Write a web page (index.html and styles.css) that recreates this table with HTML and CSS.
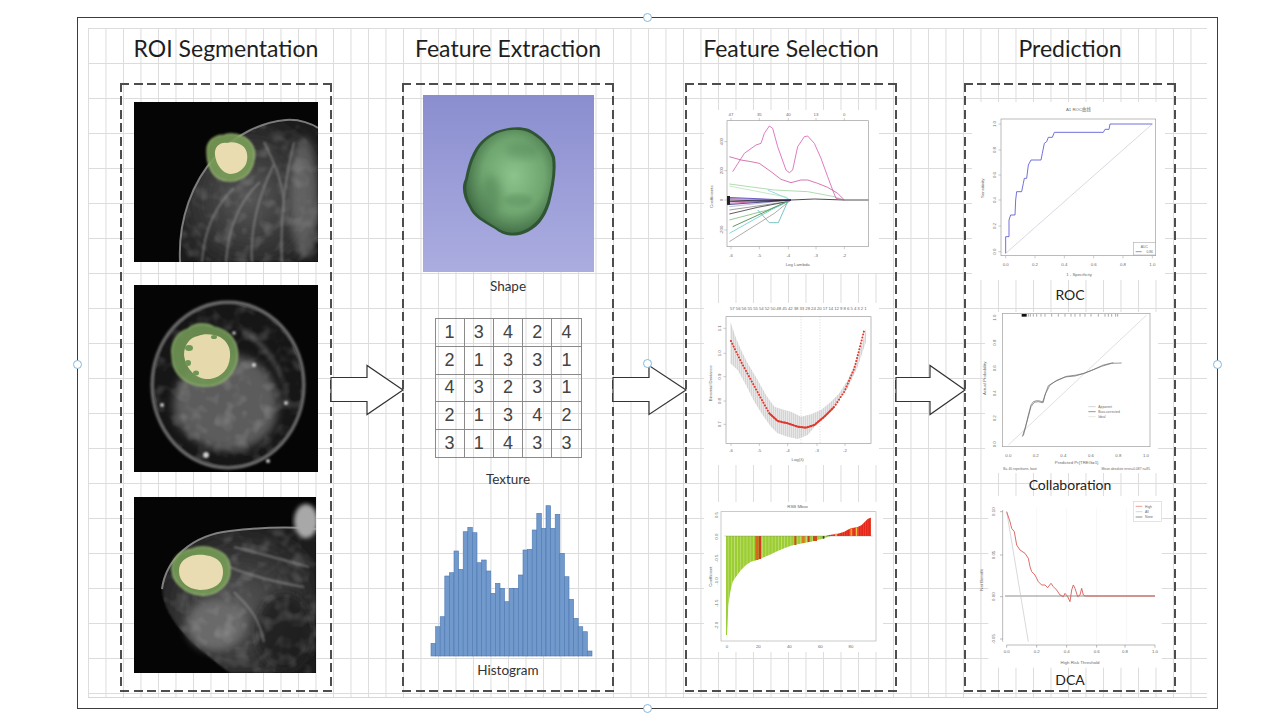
FILE: index.html
```html
<!DOCTYPE html>
<html lang="en">
<head>
<meta charset="utf-8">
<title>Radiomics workflow</title>
<link rel="stylesheet" href="styles.css">
</head>
<body>
<svg class="defs" aria-hidden="true">
  <defs>
    <radialGradient id="tissue" cx="50%" cy="55%" r="60%">
      <stop offset="0" stop-color="#575757"/>
      <stop offset=".55" stop-color="#383838"/>
      <stop offset="1" stop-color="#1e1e1e"/>
    </radialGradient>
    <linearGradient id="shapebg" x1="0" y1="0" x2="0" y2="1">
      <stop offset="0" stop-color="#8a8ecf"/>
      <stop offset="1" stop-color="#abade0"/>
    </linearGradient>
    <radialGradient id="blobg" cx="55%" cy="45%" r="60%">
      <stop offset="0" stop-color="#8cc28b"/>
      <stop offset=".6" stop-color="#6fa56f"/>
      <stop offset="1" stop-color="#3b6640"/>
    </radialGradient>
    <filter id="noise" x="0" y="0" width="100%" height="100%">
      <feTurbulence type="fractalNoise" baseFrequency="0.07" numOctaves="2" seed="11"/>
      <feColorMatrix values="0 0 0 0 1  0 0 0 0 1  0 0 0 0 1  2.6 0 0 0 -1.2"/>
      <feComposite in2="SourceGraphic" operator="in"/>
    </filter>
    <filter id="b1"><feGaussianBlur stdDeviation="0.8"/></filter>
    <filter id="b2"><feGaussianBlur stdDeviation="2"/></filter>
    <filter id="b4" x="-30%" y="-30%" width="160%" height="160%"><feGaussianBlur stdDeviation="4"/></filter>
    <pattern id="vl" width="6" height="10" patternUnits="userSpaceOnUse">
      <rect width="1.4" height="10" fill="#bdbdbd"/>
    </pattern>
    <pattern id="gbars" width="9.4" height="10" patternUnits="userSpaceOnUse">
      <rect width="9.4" height="10" fill="#d6ee9c"/>
      <rect width="8" height="10" fill="#9ccd34"/>
    </pattern>
    <pattern id="rbars" width="7" height="10" patternUnits="userSpaceOnUse">
      <rect width="7" height="10" fill="#f07a5a"/>
      <rect width="6" height="10" fill="#e5261b"/>
    </pattern>
  </defs>
</svg>

<div class="frame">
  <div class="grid">

    <!-- Column 1 -->
    <section class="col">
      <h2 class="title">ROI Segmentation</h2>
      <div class="box">
        <svg class="mri mri1" viewBox="0 0 184 160">
          <rect width="184" height="160" fill="#050505"/>
          <path d="M46 160 C44 118 58 80 82 54 C102 32 128 20 152 18 C166 17 178 22 184 26 L184 160 Z" fill="url(#tissue)" filter="url(#b1)"/>
          <path d="M46 160 C44 118 58 80 82 54 C102 32 128 20 152 18 C166 17 178 22 184 26 L184 160 Z" fill="#fff" filter="url(#noise)" opacity=".16"/>
          <ellipse cx="170" cy="95" rx="14" ry="60" fill="#9a9a9a" opacity=".45" filter="url(#b4)"/>
          <g stroke="#9a9a9a" stroke-width="2.2" fill="none" opacity=".5" filter="url(#b1)">
            <path d="M68 160 C70 130 80 105 100 86"/>
            <path d="M92 160 C94 130 104 100 126 80"/>
            <path d="M118 160 C116 130 124 95 140 62"/>
            <path d="M148 160 C146 120 150 80 160 40"/>
            <path d="M130 40 C140 60 150 80 150 110"/>
          </g>
          <path d="M46 160 C44 118 58 80 82 54 C102 32 128 20 152 18 C166 17 178 22 184 26" fill="none" stroke="#8d8d8d" stroke-width="2" opacity=".85"/>
          <path d="M73 50 C72 40 80 33 90 33 C96 31 104 32 110 35 C118 40 122 48 120 58 C119 66 114 74 106 77 C100 80 92 80 86 77 C78 74 73 63 73 50 Z" fill="#7a9f58" opacity=".9" stroke="#a9c77f" stroke-width="1.2" filter="url(#b1)"/>
          <path d="M81 53 C80 45 86 40 93 41 C98 39 106 41 110 45 C114 50 114 57 112 62 C109 68 103 72 96 72 C88 71 82 62 81 53 Z" fill="#e9dcb1"/>
        </svg>
        <svg class="mri mri2" viewBox="0 0 184 187">
          <rect width="184" height="187" fill="#050505"/>
          <ellipse cx="94" cy="100" rx="76" ry="83" fill="#161616" stroke="#6e6e6e" stroke-width="3" filter="url(#b1)"/>
          <path d="M40 112 C45 82 80 62 110 72 C140 82 150 112 140 140 C128 165 95 170 70 160 C50 150 36 136 40 112 Z" fill="#5c5c5c" filter="url(#b4)"/>
          <path d="M100 40 C130 50 150 80 155 120 C150 90 130 60 100 40 Z" fill="#4a4a4a" filter="url(#b2)"/>
          <ellipse cx="94" cy="100" rx="74" ry="81" fill="#fff" filter="url(#noise)" opacity=".16"/>
          <g fill="#cfcfcf" filter="url(#b1)">
            <circle cx="72" cy="170" r="3"/><circle cx="120" cy="80" r="2.2"/><circle cx="152" cy="118" r="2"/>
            <circle cx="28" cy="120" r="2"/><circle cx="134" cy="176" r="2"/><circle cx="100" cy="48" r="1.8"/>
          </g>
          <path d="M38 70 C36 58 44 46 54 44 C60 38 72 37 80 42 C92 44 101 52 103 64 C106 78 98 92 86 98 C76 103 62 102 52 96 C42 90 38 80 38 70 Z" fill="#6f9655" opacity=".9" stroke="#9fc27a" stroke-width="1.2" filter="url(#b1)"/>
          <path d="M50 70 C50 60 56 52 64 51 C70 48 80 49 86 52 C93 56 97 63 96 72 C95 84 88 92 76 94 C64 95 52 86 50 70 Z" fill="#e6d9ac"/>
          <g fill="#6f9655"><ellipse cx="55" cy="63" rx="4" ry="3"/><ellipse cx="54" cy="78" rx="3" ry="3"/><ellipse cx="62" cy="88" rx="3" ry="2.5"/><ellipse cx="80" cy="52" rx="3" ry="2"/></g>
        </svg>
        <svg class="mri mri3" viewBox="0 0 182 176">
          <rect width="182" height="176" fill="#050505"/>
          <path d="M28 92 C32 62 58 38 96 34 C130 30 160 30 182 32 L182 176 L96 176 C62 150 30 125 28 92 Z" fill="url(#tissue)" filter="url(#b1)"/>
          <ellipse cx="82" cy="128" rx="30" ry="26" fill="#6a6a6a" filter="url(#b4)"/>
          <ellipse cx="150" cy="135" rx="28" ry="38" fill="#1f1f1f" opacity=".8" filter="url(#b4)"/>
          <path d="M28 92 C32 62 58 38 96 34 C130 30 160 30 182 32 L182 176 L96 176 C62 150 30 125 28 92 Z" fill="#fff" filter="url(#noise)" opacity=".16"/>
          <g stroke="#a0a0a0" stroke-width="2.2" fill="none" opacity=".5" filter="url(#b1)">
            <path d="M100 50 C120 55 140 60 175 70"/>
            <path d="M95 70 C120 80 140 85 170 90"/>
            <path d="M100 95 C115 110 125 120 130 145"/>
          </g>
          <path d="M28 92 C32 62 58 38 96 34 C130 30 160 30 182 32" fill="none" stroke="#808080" stroke-width="2"/>
          <ellipse cx="172" cy="24" rx="12" ry="17" fill="#a8a8a8" filter="url(#b2)"/>
          <path d="M38 74 C37 62 46 53 58 52 C64 49 74 49 80 52 C90 55 96 62 96 72 C97 84 88 95 74 98 C58 100 40 90 38 74 Z" fill="#759c57" opacity=".9" stroke="#a3c47c" stroke-width="1.2" filter="url(#b1)"/>
          <path d="M45 74 C45 65 52 59 62 58 C70 57 80 59 85 64 C90 69 90 78 87 84 C83 90 75 93 66 93 C54 92 45 85 45 74 Z" fill="#eadcb2"/>
        </svg>
      </div>
    </section>

    <div class="gap gap1">
      <svg class="arrow" width="70" height="50" viewBox="0 0 70 50"><path d="M-1 12.5 H35 V0.5 L71 25 L35 49.5 V36.5 H-1 Z"/></svg>
    </div>

    <!-- Column 2 -->
    <section class="col">
      <h2 class="title">Feature Extraction</h2>
      <div class="box">
        <svg class="shape" viewBox="0 0 171 177">
          <rect width="171" height="177" fill="url(#shapebg)"/>
          <path d="M77 35 C86 32 97 31 106 34 C118 40 128 50 132 62 C134 76 131 92 127 108 C122 124 114 134 100 139 C90 142 80 141 72 134 C60 127 50 122 46 112 C40 102 38 92 42 84 C44 74 46 66 50 58 C56 46 66 38 77 35 Z" fill="#2f5533"/>
          <path d="M78 37 C87 34 97 34 105 37 C116 42 126 52 129 63 C131 77 128 92 124 107 C119 122 112 131 99 136 C90 139 81 138 73 132 C62 125 52 120 48 110 C43 101 42 92 45 84 C47 74 49 66 53 59 C58 48 68 40 78 37 Z" fill="url(#blobg)"/>
          <ellipse cx="68" cy="100" rx="10" ry="20" fill="#4a7c50" opacity=".45" filter="url(#b4)"/>
          <ellipse cx="100" cy="55" rx="18" ry="8" fill="#4f8455" opacity=".4" filter="url(#b4)"/>
          <ellipse cx="95" cy="105" rx="14" ry="6" fill="#4f8455" opacity=".35" filter="url(#b2)"/>
        </svg>
        <div class="label l-shape">Shape</div>
        <div class="texture">
          <span>1</span><span>3</span><span>4</span><span>2</span><span>4</span>
          <span>2</span><span>1</span><span>3</span><span>3</span><span>1</span>
          <span>4</span><span>3</span><span>2</span><span>3</span><span>1</span>
          <span>2</span><span>1</span><span>3</span><span>4</span><span>2</span>
          <span>3</span><span>1</span><span>4</span><span>3</span><span>3</span>
        </div>
        <div class="label l-texture">Texture</div>
        <svg class="hist" viewBox="0 0 180 160">
          <g fill="#7199cc" stroke="#4c79b2" stroke-width=".6">
            <rect x="13" y="143.3" width="4.6" height="12.7"/>
            <rect x="17.6" y="126.7" width="4.6" height="29.3"/>
            <rect x="22.2" y="116.7" width="4.6" height="39.3"/>
            <rect x="26.8" y="76" width="4.6" height="80"/>
            <rect x="31.4" y="72.7" width="4.6" height="83.3"/>
            <rect x="36" y="51" width="4.6" height="105"/>
            <rect x="40.6" y="69.3" width="4.6" height="86.7"/>
            <rect x="45.2" y="31.7" width="4.6" height="124.3"/>
            <rect x="49.8" y="27.3" width="4.6" height="128.7"/>
            <rect x="54.4" y="32.7" width="4.6" height="123.3"/>
            <rect x="59" y="62.7" width="4.6" height="93.3"/>
            <rect x="63.6" y="60" width="4.6" height="96"/>
            <rect x="68.2" y="71" width="4.6" height="85"/>
            <rect x="72.8" y="93.3" width="4.6" height="62.7"/>
            <rect x="77.4" y="83.3" width="4.6" height="72.7"/>
            <rect x="82" y="88.3" width="4.6" height="67.7"/>
            <rect x="86.6" y="101.7" width="4.6" height="54.3"/>
            <rect x="91.2" y="88.3" width="4.6" height="67.7"/>
            <rect x="95.8" y="88.3" width="4.6" height="67.7"/>
            <rect x="100.4" y="75" width="4.6" height="81"/>
            <rect x="105" y="50" width="4.6" height="106"/>
            <rect x="109.6" y="49.3" width="4.6" height="106.7"/>
            <rect x="114.2" y="30" width="4.6" height="126"/>
            <rect x="118.8" y="13.3" width="4.6" height="142.7"/>
            <rect x="123.4" y="28.3" width="4.6" height="127.7"/>
            <rect x="128" y="5.7" width="4.6" height="150.3"/>
            <rect x="132.6" y="28.3" width="4.6" height="127.7"/>
            <rect x="137.2" y="14.3" width="4.6" height="141.7"/>
            <rect x="141.8" y="53.3" width="4.6" height="102.7"/>
            <rect x="146.4" y="76.7" width="4.6" height="79.3"/>
            <rect x="151" y="99.3" width="4.6" height="56.7"/>
            <rect x="155.6" y="118.3" width="4.6" height="37.7"/>
            <rect x="160.2" y="126.7" width="4.6" height="29.3"/>
            <rect x="164.8" y="131.7" width="4.6" height="24.3"/>
            <rect x="169.4" y="151" width="4.6" height="5"/>
          </g>
        </svg>
        <div class="label l-hist">Histogram</div>
      </div>
    </section>

    <div class="gap gap2">
      <svg class="arrow" width="71" height="50" viewBox="0 0 71 50"><path d="M-1 12.5 H35 V0.5 L72 25 L35 49.5 V36.5 H-1 Z"/></svg>
    </div>

    <!-- Column 3 -->
    <section class="col">
      <h2 class="title">Feature Selection</h2>
      <div class="box">
        <svg class="sel sel1" viewBox="0 0 600 570">
          <rect x="39" y="30" width="525" height="489" fill="#fff"/>
          <g class="ax" text-anchor="middle">
            <text x="120" y="48">47</text><text x="205" y="48">35</text><text x="292" y="48">40</text><text x="375" y="48">13</text><text x="460" y="48">0</text>
            <text x="120" y="470">-6</text><text x="205" y="470">-5</text><text x="292" y="470">-4</text><text x="375" y="470">-3</text><text x="460" y="470">-2</text>
            <text x="320" y="498">Log Lambda</text>
            <text transform="translate(96 125) rotate(-90)">400</text>
            <text transform="translate(96 212) rotate(-90)">200</text>
            <text transform="translate(96 300) rotate(-90)">0</text>
            <text transform="translate(96 390) rotate(-90)">-200</text>
            <text transform="translate(66 290) rotate(-90)">Coefficients</text>
          </g>
          <rect x="108" y="62" width="424" height="378" fill="none" stroke="#9a9a9a" stroke-width="2"/>
          <g stroke="#9a9a9a" stroke-width="1.5">
            <path d="M120 440v8M205 440v8M292 440v8M375 440v8M460 440v8M120 62v-8M205 62v-8M292 62v-8M375 62v-8M460 62v-8M108 125h-8M108 212h-8M108 300h-8M108 390h-8"/>
          </g>
          <g fill="none" stroke-width="2.4" stroke-linejoin="round">
            <polyline stroke="#9bd39b" points="115,252 250,270 350,275 430,290 460,300"/>
            <polyline stroke="#b9e2b9" points="115,258 290,292"/>
            <polyline stroke="#7fd0d8" points="230,270 300,300"/>
            <polyline stroke="#aab0d0" points="115,320 300,300"/>
            <polyline stroke="#888" points="115,330 290,305"/>
            <polyline stroke="#333" points="115,342 200,322 290,305"/>
            <polyline stroke="#77bb77" points="115,360 230,330 300,300"/>
            <polyline stroke="#3a7a3a" points="125,380 300,300"/>
            <polyline stroke="#66cccc" points="115,400 240,330 290,305"/>
            <polyline stroke="#55b5b5" points="200,330 235,368 262,368 290,305"/>
            <polyline stroke="#999" points="115,425 250,340 300,300"/>
            <polyline stroke="#3c3cc8" points="108,292 240,298 300,300"/>
            <polyline stroke="#7b3fa0" points="108,296 300,300"/>
            <polyline stroke="#1a1a80" points="108,305 300,300"/>
            <polyline stroke="#cc44aa" points="108,310 240,303 300,300"/>
            <polyline stroke="#2a2a70" points="108,314 300,300"/>
            <polyline stroke="#222" points="108,300 230,303 300,300 370,297 460,300 532,300"/>
            <polyline stroke="#d65bb0" points="125,215 160,160 195,135 210,130 220,100 235,78 245,85 260,140 285,210 295,218 305,210 320,140 340,110 350,108 370,130 390,175 410,230 425,270 435,295 460,300"/>
            <polyline stroke="#c9579c" points="115,170 150,180 180,185 205,190 240,215 270,238 300,248 330,240 350,240 380,250 410,262 440,280 460,300"/>
          </g>
          <rect x="108" y="288" width="9" height="26" fill="#222"/>
        </svg>

        <svg class="sel sel2" viewBox="0 0 600 600">
          <rect x="39" y="24" width="525" height="486" fill="#fff"/>
          <g class="ax" text-anchor="middle">
            <text x="322" y="46" textLength="410">57 56 56 55 55 54 52 50 48 45 42 38 33 28 24 20 17 14 12 9 8 6 5 4 3 2 1</text>
            <text x="120" y="472">-6</text><text x="205" y="472">-5</text><text x="290" y="472">-4</text><text x="378" y="472">-3</text><text x="462" y="472">-2</text>
            <text x="320" y="498">Log(λ)</text>
            <text transform="translate(90 100) rotate(-90)">1.1</text>
            <text transform="translate(90 175) rotate(-90)">1.0</text>
            <text transform="translate(90 245) rotate(-90)">0.9</text>
            <text transform="translate(90 318) rotate(-90)">0.8</text>
            <text transform="translate(90 388) rotate(-90)">0.7</text>
            <text transform="translate(62 265) rotate(-90)">Binomial Deviance</text>
          </g>
          <rect x="105" y="65" width="435" height="380" fill="none" stroke="#9a9a9a" stroke-width="2"/>
          <g stroke="#9a9a9a" stroke-width="1.5">
            <path d="M120 445v8M205 445v8M290 445v8M378 445v8M462 445v8M105 100h-8M105 175h-8M105 245h-8M105 318h-8M105 388h-8"/>
          </g>
          <polygon fill="#e6e6e6" points="118,80 135,130 150,165 170,205 200,255 225,300 250,335 280,345 300,350 330,365 360,358 390,345 420,320 445,295 470,255 495,200 520,125 525,100 525,140 500,215 470,280 440,320 410,352 380,385 350,420 320,432 290,425 260,415 240,395 215,360 190,320 165,270 140,225 118,205"/>
          <polygon fill="url(#vl)" points="118,80 135,130 150,165 170,205 200,255 225,300 250,335 280,345 300,350 330,365 360,358 390,345 420,320 445,295 470,255 495,200 520,125 525,100 525,140 500,215 470,280 440,320 410,352 380,385 350,420 320,432 290,425 260,415 240,395 215,360 190,320 165,270 140,225 118,205"/>
          <g stroke="#b0b0b0" stroke-width="1.5" stroke-dasharray="3 5">
            <path d="M330 65V445M387 65V445"/>
          </g>
          <polyline fill="none" stroke="#e0382c" stroke-width="6" stroke-linecap="round" stroke-dasharray="0.1 9" points="120,138 150,200 180,255 210,310 235,355 260,378 290,385 320,395 345,398 370,390 400,365 430,335 460,290 490,220 520,105"/>
          <polyline fill="none" stroke="#e0382c" stroke-width="6" stroke-linecap="round" stroke-dasharray="0.1 4" points="235,355 260,378 290,385 320,395 345,398 370,390 400,365 430,335"/>
        </svg>

        <svg class="sel sel3" viewBox="0 0 600 480">
          <rect x="39" y="21" width="537" height="450" fill="#fff"/>
          <g class="ax" text-anchor="middle">
            <text x="320" y="40">RSB Mbox</text>
            <text x="108" y="458">0</text><text x="202" y="458">20</text><text x="295" y="458">40</text><text x="388" y="458">60</text><text x="480" y="458">80</text>
            <text transform="translate(80 60) rotate(-90)">0.5</text>
            <text transform="translate(80 125) rotate(-90)">0.0</text>
            <text transform="translate(80 190) rotate(-90)">-0.5</text>
            <text transform="translate(80 258) rotate(-90)">-1.0</text>
            <text transform="translate(80 325) rotate(-90)">-1.5</text>
            <text transform="translate(80 392) rotate(-90)">-2.0</text>
            <text transform="translate(62 245) rotate(-90)">Coefficient</text>
          </g>
          <rect x="90" y="50" width="465" height="388" fill="none" stroke="#b0b0b0" stroke-width="2"/>
          <polygon fill="url(#gbars)" points="105,123 420,123 410,126 400,130 380,135 360,140 340,144 320,148 300,152 280,160 260,168 240,178 215,188 200,195 180,200 165,210 150,225 135,245 125,260 118,290 112,330 110,380 108,420 105,420"/>
          <g>
            <rect x="193" y="123" width="9" height="72" fill="#d9661f"/>
            <rect x="203" y="123" width="7" height="69" fill="#cf3b1c"/>
            <rect x="310" y="123" width="6" height="27" fill="#d84a1c"/>
            <rect x="333" y="123" width="8" height="21" fill="#e07b20"/>
            <rect x="350" y="123" width="6" height="18" fill="#cf3b1c"/>
            <rect x="366" y="123" width="12" height="15" fill="#d2491c"/>
            <rect x="395" y="123" width="5" height="8" fill="#3a3a3a"/>
          </g>
          <polygon fill="url(#rbars)" points="405,123 412,121 420,119 440,116 460,110 470,104 480,100 500,96 512,90 520,82 530,72 538,68 540,68 540,123"/>
          <rect x="432" y="116" width="6" height="7" fill="#e8b040"/>
          <rect x="478" y="100" width="6" height="23" fill="#f0a030"/>
          <rect x="494" y="97" width="5" height="26" fill="#f0c040"/>
          <line x1="100" y1="123" x2="545" y2="123" stroke="#777" stroke-width="1"/>
        </svg>
      </div>
    </section>

    <div class="gap gap3">
      <svg class="arrow" width="67" height="50" viewBox="0 0 67 50"><path d="M-1 12.5 H33 V0.5 L68 25 L33 49.5 V36.5 H-1 Z"/></svg>
    </div>

    <!-- Column 4 -->
    <section class="col">
      <h2 class="title">Prediction</h2>
      <div class="box">
        <svg class="pred roc" viewBox="0 0 630 546">
          <rect x="21" y="6" width="579" height="534" fill="#fff"/>
          <g class="ax" text-anchor="middle">
            <text class="cjk" x="340" y="34">A1 ROC曲线</text>
            <text x="122" y="497">0.0</text><text x="210" y="497">0.2</text><text x="298" y="497">0.4</text><text x="386" y="497">0.6</text><text x="474" y="497">0.8</text><text x="562" y="497">1.0</text>
            <text x="342" y="528">1 - Specificity</text>
            <text transform="translate(92 72) rotate(-90)">1.0</text>
            <text transform="translate(92 150) rotate(-90)">0.8</text>
            <text transform="translate(92 225) rotate(-90)">0.6</text>
            <text transform="translate(92 300) rotate(-90)">0.4</text>
            <text transform="translate(92 378) rotate(-90)">0.2</text>
            <text transform="translate(92 455) rotate(-90)">0.0</text>
            <text transform="translate(56 265) rotate(-90)">Sensitivity</text>
          </g>
          <rect x="108" y="57" width="464" height="410" fill="none" stroke="#9a9a9a" stroke-width="2"/>
          <g stroke="#9a9a9a" stroke-width="1.5">
            <path d="M122 467v8M210 467v8M298 467v8M386 467v8M474 467v8M562 467v8M108 72h-8M108 150h-8M108 225h-8M108 300h-8M108 378h-8M108 455h-8"/>
          </g>
          <line x1="122" y1="460" x2="562" y2="72" stroke="#b8b8c8" stroke-width="1.6"/>
          <polyline fill="none" stroke="#5b5bd6" stroke-width="2.6" points="122,460 122,410 132,410 132,360 137,345 150,345 152,300 155,275 170,275 175,250 178,235 185,235 190,195 198,180 228,180 232,160 238,130 245,125 250,112 262,112 268,97 415,97 420,88 432,88 435,72 562,72"/>
          <rect x="505" y="428" width="67" height="37" fill="#fff" stroke="#9a9a9a" stroke-width="1.5"/>
          <g class="ax tiny" text-anchor="middle"><text x="538" y="443">AUC</text><text x="554" y="459">0.86</text></g>
          <line x1="512" y1="455" x2="530" y2="455" stroke="#5b5bd6" stroke-width="2"/>
        </svg>
        <div class="plabel pl-roc">ROC</div>

        <svg class="pred cal" viewBox="0 9 630 498">
          <rect x="60" y="21" width="519" height="483" fill="#fff"/>
          <g class="ax" text-anchor="middle">
            <text x="130" y="455">0.0</text><text x="212" y="455">0.2</text><text x="295" y="455">0.4</text><text x="378" y="455">0.6</text><text x="460" y="455">0.8</text><text x="543" y="455">1.0</text>
            <text x="335" y="478">Predicted Pr{TREG=1}</text>
            <text transform="translate(92 38) rotate(-90)">1.0</text>
            <text transform="translate(92 113) rotate(-90)">0.8</text>
            <text transform="translate(92 190) rotate(-90)">0.6</text>
            <text transform="translate(92 265) rotate(-90)">0.4</text>
            <text transform="translate(92 340) rotate(-90)">0.2</text>
            <text transform="translate(92 418) rotate(-90)">0.0</text>
            <text transform="translate(64 220) rotate(-90)">Actual Probability</text>
          </g>
          <g class="ax tiny">
            <text x="115" y="495">B= 40 repetitions, boot</text>
            <text x="555" y="495" text-anchor="end">Mean absolute error=0.087 n=85</text>
          </g>
          <rect x="112" y="25" width="443" height="400" fill="none" stroke="#9a9a9a" stroke-width="2"/>
          <rect x="170" y="27" width="15" height="8" fill="#111"/>
          <path stroke="#555" stroke-width="1.5" d="M190 27v8M196 27v8M205 27v8M215 27v8M228 27v8M240 27v8M260 27v8M280 27v8M300 27v8M318 27v8M330 27v8M345 27v8M360 27v8M378 27v8M400 27v8M420 27v8M430 27v8M440 27v8M452 27v8M458 27v8"/>
          <line x1="130" y1="420" x2="545" y2="30" stroke="#cfcfcf" stroke-width="2"/>
          <polyline fill="none" stroke="#8a8a8a" stroke-width="2.6" points="175,392 182,365 190,330 198,300 205,290 215,287 225,288 235,292 240,270 250,242 270,230 300,216 330,213 355,206 380,196 410,184 440,175 470,174"/>
          <polyline fill="none" stroke="#666" stroke-width="2" points="172,395 180,370 190,335 198,305 208,292 220,290 232,293 242,265 255,240 275,226 305,214 335,210 360,204 385,194 415,180 445,173"/>
          <path stroke="#aaa" stroke-width="1.5" d="M370 305h22"/>
          <path stroke="#666" stroke-width="2" d="M370 320h22"/>
          <path stroke="#cfcfcf" stroke-width="1.5" d="M370 335h22"/>
          <g class="ax tiny"><text x="400" y="309">Apparent</text><text x="400" y="324">Bias-corrected</text><text x="400" y="339">Ideal</text></g>
        </svg>
        <div class="plabel pl-cal">Collaboration</div>

        <svg class="pred dca" viewBox="0 3 630 522">
          <rect x="70" y="3" width="520" height="515" fill="#fff"/>
          <path stroke="#eeeeee" stroke-width="1.5" d="M215 40V445M305 40V445M395 40V445M485 40V445"/>
          <g class="ax" text-anchor="middle">
            <text x="125" y="473">0.0</text><text x="215" y="473">0.2</text><text x="305" y="473">0.4</text><text x="395" y="473">0.6</text><text x="480" y="473">0.8</text><text x="570" y="473">1.0</text>
            <text x="345" y="507">High Risk Threshold</text>
            <text transform="translate(90 50) rotate(-90)">0.10</text>
            <text transform="translate(90 180) rotate(-90)">0.05</text>
            <text transform="translate(90 305) rotate(-90)">0.00</text>
            <text transform="translate(90 432) rotate(-90)">-0.05</text>
            <text transform="translate(54 255) rotate(-90)">Net Benefit</text>
          </g>
          <path stroke="#777" stroke-width="1.5" fill="none" d="M113 45V440M105 50h8M105 180h8M105 305h8M105 432h8M125 450H570M125 450v8M215 450v8M305 450v8M395 450v8M480 450v8M570 450v8"/>
          <line x1="120" y1="303" x2="570" y2="303" stroke="#555" stroke-width="2"/>
          <line x1="125" y1="50" x2="190" y2="440" stroke="#c4c4c4" stroke-width="2"/>
          <polyline fill="none" stroke="#d9534f" stroke-width="2.6" stroke-linejoin="round" points="125,50 135,80 140,100 148,110 155,150 165,165 180,175 190,190 195,215 200,230 210,240 220,260 230,270 240,270 248,278 258,265 265,275 275,285 285,300 295,305 300,295 308,305 315,320 320,285 325,270 330,280 338,305 345,300 350,280 355,300 360,303 570,303"/>
          <rect x="505" y="20" width="85" height="60" fill="#fff" stroke="#c8c8c8" stroke-width="1.5"/>
          <path stroke="#e8a09a" stroke-width="3" d="M512 34h20"/>
          <path stroke="#c4c4c4" stroke-width="2" d="M512 50h20"/>
          <path stroke="#555" stroke-width="2" d="M512 66h20"/>
          <g class="ax tiny"><text x="540" y="38">High</text><text x="540" y="54">All</text><text x="540" y="70">None</text></g>
        </svg>
        <div class="plabel pl-dca">DCA</div>
      </div>
    </section>

  </div>

  <span class="handle h-top"></span>
  <span class="handle h-left"></span>
  <span class="handle h-right"></span>
  <span class="handle h-center"></span>
  <span class="handle h-bottom"></span>
</div>
</body>
</html>
```

FILE: styles.css
```css
* { box-sizing: border-box; }

html, body {
  margin: 0;
  background: #ffffff;
}

body {
  width: 1277px;
  height: 715px;
  overflow: hidden;
  font-family: Lato, "Open Sans", "Liberation Sans", sans-serif;
  color: #222222;
}

.defs {
  display: block;
  width: 0;
  height: 0;
}

.frame {
  position: relative;
  margin: 17px 0 0 77px;
  width: 1141px;
  height: 692px;
  border: 1px solid #3c3c3c;
  padding: 10px;
}

.grid {
  height: 100%;
  display: flex;
  padding-left: 32px;
  background-color: #ffffff;
  background-image:
    linear-gradient(90deg, #dcdcdc 1px, transparent 1px),
    linear-gradient(180deg, #dcdcdc 1px, transparent 1px);
  background-size: 17.5px 100%, 100% 35px;
  border-bottom: 1px solid #d8d8d8;
}

.col {
  width: 212px;
  flex: none;
  display: flex;
  flex-direction: column;
}

.title {
  height: 55px;
  margin: 0;
  font-size: 23px;
  font-weight: 400;
  line-height: 40px;
  text-align: center;
  white-space: nowrap;
  color: #1e1e1e;
}

.box {
  height: 609px;
  padding: 2px;
  display: flex;
  flex-direction: column;
  align-items: center;
  background:
    repeating-linear-gradient(90deg, #4d4d4d 0 9px, transparent 9px 13.5px) 0 0 / 100% 2px no-repeat,
    repeating-linear-gradient(90deg, #4d4d4d 0 9px, transparent 9px 13.5px) 0 100% / 100% 2px no-repeat,
    repeating-linear-gradient(180deg, #4d4d4d 0 9px, transparent 9px 13.5px) 0 0 / 2px 100% no-repeat,
    repeating-linear-gradient(180deg, #4d4d4d 0 9px, transparent 9px 13.5px) 100% 0 / 2px 100% no-repeat;
}

.gap {
  flex: none;
  display: flex;
  align-items: center;
  padding-top: 55px;
}
.gap1 { width: 70px; }
.gap2 { width: 71px; }
.gap3 { width: 67px; }

.arrow {
  display: block;
  overflow: visible;
}
.arrow path {
  fill: #ffffff;
  stroke: #333333;
  stroke-width: 1.2;
}

/* Column 1: MRI slices */
.mri { display: block; flex: none; }
.mri1 { width: 184px; height: 160px; margin-top: 17px; }
.mri2 { width: 184px; height: 187px; margin-top: 23px; }
.mri3 { width: 182px; height: 176px; margin-top: 25px; margin-left: -2px; }

/* Column 2: features */
.shape { display: block; flex: none; width: 171px; height: 177px; margin-top: 10px; }

.label {
  width: 100%;
  text-align: center;
  font-size: 13.5px;
  color: #333333;
}
.l-shape { height: 28px; line-height: 28px; }
.l-texture { height: 42px; line-height: 42px; }
.l-hist { height: 20px; line-height: 20px; }

.texture {
  width: 147px;
  height: 140px;
  margin-top: 18px;
  display: grid;
  grid-template-columns: repeat(5, 1fr);
  grid-template-rows: repeat(5, 1fr);
  border-top: 1px solid #8a8a8a;
  border-left: 1px solid #8a8a8a;
}
.texture span {
  display: flex;
  align-items: center;
  justify-content: center;
  border-right: 1px solid #8a8a8a;
  border-bottom: 1px solid #8a8a8a;
  font-family: "Liberation Sans", Arial, sans-serif;
  font-size: 18px;
  color: #444444;
}

.hist { display: block; flex: none; width: 180px; height: 160px; }

/* Column 3: selection charts */
.sel { display: block; flex: none; width: 200px; }
.sel1 { height: 190px; margin-top: 15px; }
.sel2 { height: 200px; margin-top: 5px; }
.sel3 { height: 160px; }

/* Column 4: prediction charts */
.pred { display: block; flex: none; width: 210px; }
.roc { height: 182px; margin-top: 15px; }
.cal { height: 166px; }
.dca { height: 174px; }

.plabel {
  width: 100%;
  text-align: center;
  font-size: 14px;
  color: #222222;
}
.pl-roc { height: 26px; line-height: 26px; }
.pl-cal { height: 22px; line-height: 22px; }
.pl-dca { height: 20px; line-height: 20px; }

/* tiny chart text */
.ax {
  font-family: "Liberation Sans", Arial, sans-serif;
  font-size: 13px;
  fill: #6a6a6a;
}
.ax.tiny { font-size: 10px; }
.cjk { font-family: "Liberation Sans", "Noto Sans CJK SC", sans-serif; }

/* selection handles of the drawing canvas */
.handle {
  position: absolute;
  width: 9px;
  height: 9px;
  border-radius: 50%;
  border: 1.3px solid #86b8dc;
  background: #ffffff;
}
.h-top { left: 565px; top: -5px; }
.h-left { left: -5px; top: 342px; }
.h-right { left: 1135px; top: 342px; }
.h-center { left: 565px; top: 341px; }
.h-bottom { left: 565px; top: 686px; }
```
